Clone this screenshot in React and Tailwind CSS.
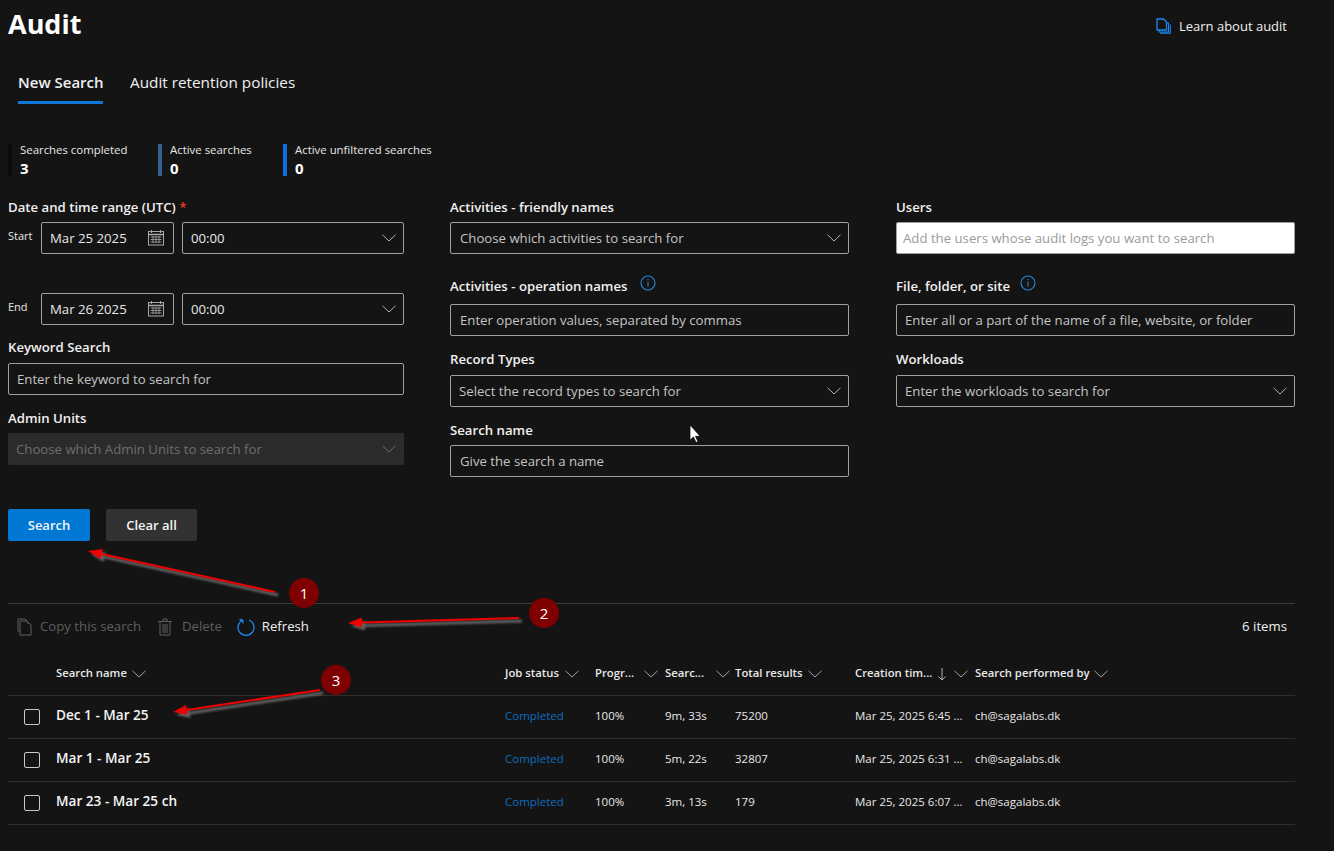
import React from 'react';

const Chevron = ({ className = 'text-[#b0b0b0]' }) => (
  <svg width="14" height="8" viewBox="0 0 14 8" fill="none" className={className}>
    <path d="M0.5 0.8 L7 7 L13.5 0.8" stroke="currentColor" strokeWidth="1" />
  </svg>
);

const Info = () => (
  <svg width="16" height="16" viewBox="0 0 16 16" fill="none" className="text-[#2b88d8]">
    <circle cx="8" cy="8" r="7" stroke="currentColor" strokeWidth="1.1" />
    <rect x="7.5" y="4" width="1" height="1.2" fill="currentColor" />
    <rect x="7.5" y="6.6" width="1" height="5" fill="currentColor" />
  </svg>
);

const Calendar = () => (
  <svg width="18" height="16" viewBox="0 0 18 16" fill="none" className="text-[#a8a8a8]">
    <rect x="1.5" y="1.5" width="15" height="13.5" stroke="currentColor" />
    <path d="M1.5 4.5 H16.5" stroke="currentColor" strokeWidth="1.5" />
    <path d="M4.5 0 V3 M13.5 0 V3" stroke="currentColor" />
    <path d="M3.5 7 H14.5 M3.5 9.5 H14.5 M3.5 12 H14.5 M6 6 V13 M9 6 V13 M12 6 V13" stroke="currentColor" strokeWidth="0.8" />
  </svg>
);

const Docs = ({ className }) => (
  <svg width="16" height="18" viewBox="0 0 16 18" fill="none" className={className}>
    <path d="M3 13 H1 V1 H8 L11 4 V6" stroke="currentColor" />
    <path d="M3 3 H10 L14 7 V17 H3 Z" stroke="currentColor" />
  </svg>
);

const LearnIcon = () => (
  <svg width="15" height="16" viewBox="0 0 15 16" fill="none" className="text-[#1a86f0] mr-[8px]">
    <path d="M1 1 H7.5 L10.5 4 V12 H1 Z" stroke="currentColor" strokeWidth="1.3" />
    <path d="M3 12 V14 H12.5 V5 H10.5 M5 14 V15.3 H14.3 V6.5" stroke="currentColor" strokeWidth="1.1" />
  </svg>
);

const Label = ({ children, className = '' }) => (
  <div className={`text-[13.2px] leading-[18px] font-semibold text-[#f0f0f0] ${className}`}>{children}</div>
);

const Box = ({ text, chevron, className = '', pad = 'pl-[9px]', tone = 'text-[#c4c4c4]', chevronTone }) => (
  <div className={`h-8 flex items-center justify-between ${pad} pr-[7px] border rounded-[2px] text-[13.2px] ${tone} ${className}`}>
    <span className="mt-[2px]">{text}</span>
    {chevron && <Chevron className={chevronTone} />}
  </div>
);

const Stat = ({ bar, title, value, className }) => (
  <div className={`flex h-8 gap-2 ${className}`}>
    <div className={`w-1 ${bar}`} />
    <div>
      <div className="text-[11.4px] leading-[13px] mt-[-1px] text-[#e8e8e8]">{title}</div>
      <div className="text-[15px] leading-[18px] mt-[3px] font-bold text-white">{value}</div>
    </div>
  </div>
);

const DateRow = ({ label, date, className = '' }) => (
  <div className={`flex ${className}`}>
    <div className="w-[33px] text-[11px] leading-[28px] text-[#e8e8e8]">{label}</div>
    <div className="w-[133px] h-8 flex items-center justify-between pl-2 pr-[8px] border border-[#a0a0a0] rounded-[2px] text-[13.2px] text-[#e8e8e8]">
      <span className="mt-[2px]">{date}</span>
      <Calendar />
    </div>
    <div className="ml-2 flex-1">
      <Box text="00:00" chevron pad="pl-[8px]" tone="text-[#e8e8e8] border-[#a0a0a0]" />
    </div>
  </div>
);

const gridCols = 'grid grid-cols-[48px_449px_90px_70px_70px_120px_120px_1fr]';

const HeadCell = ({ children, arrow, gap = 'ml-[5px]' }) => (
  <div className="flex items-center mt-[2px] text-[11.3px] font-semibold text-[#e8e8e8]">
    <span>{children}</span>
    {arrow && (
      <svg width="10" height="14" viewBox="0 0 10 14" fill="none" className="ml-[5px] text-[#b0b0b0]">
        <path d="M5 1 V13 M1.5 9.5 L5 13 L8.5 9.5" stroke="currentColor" />
      </svg>
    )}
    <span className={gap}><Chevron className="text-[#a0a0a0]" /></span>
  </div>
);

const rows = [
  ['Dec 1 - Mar 25', '9m, 33s', '75200', 'Mar 25, 2025 6:45 ...'],
  ['Mar 1 - Mar 25', '5m, 22s', '32807', 'Mar 25, 2025 6:31 ...'],
  ['Mar 23 - Mar 25 ch', '3m, 13s', '179', 'Mar 25, 2025 6:07 ...'],
];

const Row = ({ row }) => (
  <div className={`${gridCols} h-[43px] pb-[2px] items-center border-b border-[#2e2e2e] text-[11.5px] text-[#e8e8e8]`}>
    <div className="pl-4 mt-[2px]">
      <div className="w-4 h-4 border border-[#c8c8c8] rounded-[2px]" />
    </div>
    <div className="text-[13.6px] mt-[-2px] font-semibold text-[#f4f4f4]">{row[0]}</div>
    <div className="text-[#0f6cbd]">Completed</div>
    <div>100%</div>
    <div>{row[1]}</div>
    <div>{row[2]}</div>
    <div>{row[3]}</div>
    <div>ch@sagalabs.dk</div>
  </div>
);

const Badge = ({ n, className }) => (
  <div className={`absolute w-[30px] h-[30px] rounded-full bg-[#7f0000] flex items-center justify-center text-[15px] text-white ${className}`}>{n}</div>
);

const arrows = [
  [275, 592, 88, 551],
  [519, 618, 348, 623],
  [320, 690, 173, 712],
];

const Annotations = () => (
  <svg width="1334" height="851" viewBox="0 0 1334 851" fill="none" className="absolute inset-0 pointer-events-none">
    {arrows.map(([x1, y1, x2, y2], i) => {
      const a = Math.atan2(y2 - y1, x2 - x1);
      const bx = x2 - Math.cos(a) * 14;
      const by = y2 - Math.sin(a) * 14;
      const nx = -Math.sin(a) * 5;
      const ny = Math.cos(a) * 5;
      const head = `${x2},${y2} ${bx + nx},${by + ny} ${bx - nx},${by - ny}`;
      return (
        <g key={i}>
          <g transform="translate(3 3)" opacity="0.8" className="blur-[1px]">
            <line x1={x1} y1={y1} x2={bx} y2={by} stroke="#777" strokeWidth="3" />
            <polygon points={head} fill="#777" />
          </g>
          <line x1={x1} y1={y1} x2={bx} y2={by} stroke="#f00000" strokeWidth="2" />
          <polygon points={head} fill="#f00000" />
        </g>
      );
    })}
    {/* mouse cursor */}
    <path d="M690 425 V440 L693.5 437 L696 442.5 L698 441.5 L695.5 436.5 L700 436 Z" fill="#fff" stroke="#000" strokeWidth="0.7" />
  </svg>
);

const inputTone = 'text-[#c4c4c4] border-[#a0a0a0]';

export default function App() {
  return (
    <div className="relative w-[1334px] h-[851px] overflow-hidden bg-[#141414] text-white font-['Open_Sans',sans-serif]">
      <div className="pl-2 pr-[39px]">
        {/* Header */}
        <div className="flex items-start justify-between h-[50px]">
          <h1 className="text-[27px] leading-[48px] font-bold text-white">Audit</h1>
          <div className="flex items-center mt-[17px] mr-[8px] text-[13px] leading-[18px] text-[#f0f0f0]">
            <LearnIcon />
            Learn about audit
          </div>
        </div>

        {/* Tabs */}
        <div className="flex pl-[10px] h-[54px] text-[#f0f0f0]">
          <div className="w-[85px] h-[34px] mt-[20px] leading-[24px] text-[15px] font-semibold whitespace-nowrap border-b-[3px] border-[#0f78d4]">New Search</div>
          <div className="ml-[27px] mt-[20px] leading-[24px] text-[15.3px]">Audit retention policies</div>
        </div>

        {/* Stats */}
        <div className="flex mt-[40px]">
          <Stat bar="bg-[#0a0a0a]" title="Searches completed" value="3" className="w-[150px]" />
          <Stat bar="bg-[#35618f]" title="Active searches" value="0" className="w-[125px]" />
          <Stat bar="bg-[#0f6fe0]" title="Active unfiltered searches" value="0" />
        </div>

        {/* Form */}
        <div className="grid grid-cols-[396px_400px_399px] gap-x-[46px] h-[311px] mt-[22px]">
          <div>
            <Label>Date and time range (UTC) <span className="text-[#e8401c]">*</span></Label>
            <DateRow label="Start" date="Mar 25 2025" className="mt-[6px]" />
            <DateRow label="End" date="Mar 26 2025" className="mt-[39px]" />
            <Label className="mt-[13px]">Keyword Search</Label>
            <Box text="Enter the keyword to search for" pad="pl-[8px]" tone={inputTone} className="mt-[7px]" />
            <Label className="mt-[14px]">Admin Units</Label>
            <Box text="Choose which Admin Units to search for" chevron pad="pl-[7px]" tone="text-[#6e6e6e] border-transparent" chevronTone="text-[#6e6e6e]" className="mt-[6px] bg-[#2b2b2b]" />
          </div>
          <div className="w-[399px]">
            <Label>Activities - friendly names</Label>
            <Box text="Choose which activities to search for" chevron tone={inputTone} className="mt-[6px]" />
            <Label className="mt-[20px] flex items-start gap-[13px] h-[30px] pt-[3px]">Activities - operation names <span className="mt-[-2px]"><Info /></span></Label>
            <Box text="Enter operation values, separated by commas" tone={inputTone} />
            <Label className="mt-[14px]">Record Types</Label>
            <Box text="Select the record types to search for" chevron pad="pl-[8px]" tone={inputTone} className="mt-[7px]" />
            <Label className="mt-[14px]">Search name</Label>
            <Box text="Give the search a name" tone={inputTone} className="mt-[6px]" />
          </div>
          <div>
            <Label>Users</Label>
            <div className="mt-[6px] h-8 flex items-center pl-[6px] bg-white border border-[#a0a0a0] rounded-[2px] text-[13.2px] text-[#9a9a9a]">
              <span className="mt-[2px]">Add the users whose audit logs you want to search</span>
            </div>
            <Label className="mt-[20px] flex items-start gap-[10px] h-[30px] pt-[3px]">File, folder, or site <span className="mt-[-2px]"><Info /></span></Label>
            <Box text="Enter all or a part of the name of a file, website, or folder" pad="pl-[8px]" tone={inputTone} />
            <Label className="mt-[14px]">Workloads</Label>
            <Box text="Enter the workloads to search for" chevron pad="pl-[8px]" tone={inputTone} className="mt-[7px]" />
          </div>
        </div>

        {/* Actions */}
        <div className="flex gap-4 text-[13px] font-semibold text-[#f4f4f4]">
          <button className="w-[82px] h-8 pt-[2px] bg-[#0078d4] rounded-[2px]">Search</button>
          <button className="w-[91px] h-8 pt-[2px] bg-[#323232] rounded-[2px]">Clear all</button>
        </div>

        {/* Toolbar */}
        <div className="mt-[62px] border-t border-[#3a3a3a] h-[47px] flex items-center pl-[9px] pr-2 text-[13.2px] text-[#5e5e5e]">
          <Docs className="text-[#5e5e5e] mr-[7px]" />
          <span>Copy this search</span>
          <svg width="14" height="18" viewBox="0 0 14 18" fill="none" className="ml-[17px] mr-[10px] text-[#5e5e5e]">
            <path d="M0 3.5 H14 M5 3 V1 H9 V3 M2 3.5 V17 H12 V3.5 M5 6 V15 M7 6 V15 M9 6 V15" stroke="currentColor" />
          </svg>
          <span>Delete</span>
          <svg width="18" height="18" viewBox="0 0 18 18" fill="none" className="ml-[15px] mr-[7px] text-[#1a86f0]">
            <path d="M6 2 A8 8 0 1 0 12 2 M5.8 2 L6 5.5 M5.8 2 L2.5 1.5" stroke="currentColor" strokeWidth="1.3" />
          </svg>
          <span className="text-[#f0f0f0]">Refresh</span>
          <span className="ml-auto text-[#f0f0f0]">6 items</span>
        </div>

        {/* Table */}
        <div className={`${gridCols} h-[46px] items-center border-b border-[#2e2e2e]`}>
          <div />
          <HeadCell>Search name</HeadCell>
          <HeadCell gap="ml-[6px]">Job status</HeadCell>
          <HeadCell gap="ml-[10px]">Progr...</HeadCell>
          <HeadCell gap="ml-[12px]">Searc...</HeadCell>
          <HeadCell>Total results</HeadCell>
          <HeadCell arrow gap="ml-[7px]">Creation tim...</HeadCell>
          <HeadCell>Search performed by</HeadCell>
        </div>
        {rows.map((row) => <Row key={row[0]} row={row} />)}
      </div>

      {/* Annotations on top of the screenshot */}
      <Annotations />
      <Badge n="1" className="left-[289px] top-[578px]" />
      <Badge n="2" className="left-[529px] top-[598px]" />
      <Badge n="3" className="left-[321px] top-[665px]" />
    </div>
  );
}
